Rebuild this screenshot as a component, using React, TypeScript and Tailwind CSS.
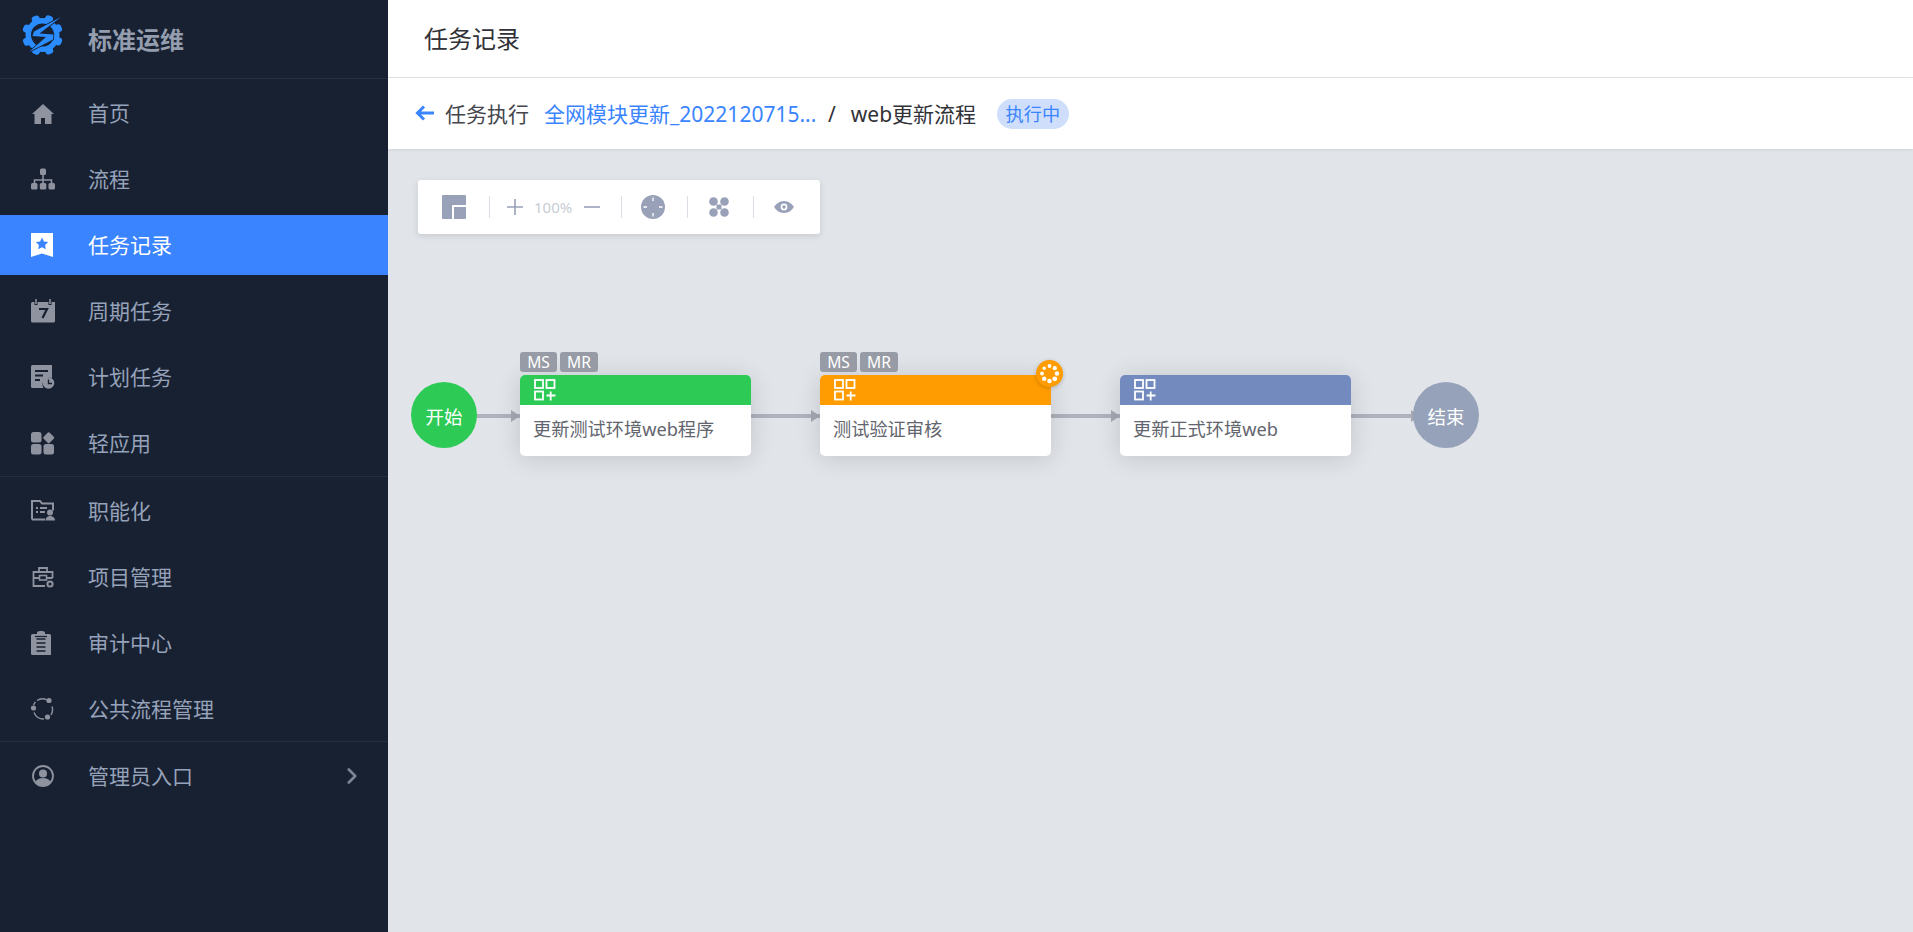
import React from "react";
import { ChevronRight } from "lucide-react";

const G = "#8e939f";

const Ic = ({ children, w = 24, h = 24 }: { children: React.ReactNode; w?: number; h?: number }) => (
  <svg width={w} height={h} viewBox={`0 0 ${w} ${h}`} className="shrink-0">{children}</svg>
);

const Home = () => <Ic><path fill={G} d="M12 3 L23 13 H20.500 V23 H3.500 V13 H1 Z" /><rect x="10" y="17" width="4" height="6" fill="#182132" /></Ic>;
const Net = () => (
  <Ic>
    <rect x="9" y="1.500" width="6" height="6.500" rx="1.500" fill={G} />
    <path d="M12 8v5M3.500 16v-3h17v3M12 13v3" stroke={G} strokeWidth="1.600" fill="none" />
    <rect x="0" y="16" width="6.500" height="6.500" rx="1.500" fill={G} />
    <rect x="8.800" y="16" width="6.500" height="6.500" rx="1.500" fill={G} />
    <rect x="17.500" y="16" width="6.500" height="6.500" rx="1.500" fill={G} />
  </Ic>
);
const Bookmark = () => (
  <Ic>
    <path fill="#fff" d="M0 0H22V24L11 20.500 0 24Z" />
    <path fill="#3a84ff" d="M11 4.500l1.900 3.900 4.300.6-3.100 3 .7 4.300-3.800-2-3.800 2 .7-4.300-3.100-3 4.300-.6Z" />
  </Ic>
);
const Cal = () => (
  <Ic>
    <path fill={G} d="M1.500 3H24v19a1.500 1.500 0 0 1-1.500 1.500H1.500A1.500 1.500 0 0 1 0 22V4.500A1.500 1.500 0 0 1 1.500 3Z" />
    <path stroke="#182132" strokeWidth="3" d="M5 0v6M19 0v6" />
    <path stroke={G} strokeWidth="1.500" d="M5 0v5M19 0v5" />
    <path d="M8 10h8l-4.500 9" stroke="#182132" strokeWidth="2.200" fill="none" />
  </Ic>
);
const Plan = () => (
  <Ic>
    <path fill={G} d="M1.500 0H21V13a7 7 0 0 0-8.500 10H1.500A1.500 1.500 0 0 1 0 21.500V1.500A1.500 1.500 0 0 1 1.500 0Z" />
    <path stroke="#182132" strokeWidth="1.800" d="M4 6h13M4 10.500h8M4 15h5" />
    <circle cx="17.500" cy="18" r="5.800" fill={G} />
    <path d="M17.500 14.500V18.500H21" stroke="#182132" strokeWidth="1.400" fill="none" />
  </Ic>
);
const Apps = () => (
  <Ic>
    <rect x="0" y="1" width="10.500" height="10.500" rx="2.500" fill={G} />
    <rect x="0" y="13" width="10.500" height="10.500" rx="2.500" fill={G} />
    <rect x="12.500" y="13" width="10.500" height="10.500" rx="2.500" fill={G} />
    <rect x="13.400" y="2.400" width="8.600" height="8.600" rx="1.500" fill={G} transform="rotate(45 17.700 6.700)" />
  </Ic>
);
const Folder = () => (
  <Ic>
    <path d="M1 20.500V2h8l2 2.500h11v7M1 20.500h13" stroke={G} strokeWidth="2" fill="none" />
    <path stroke={G} strokeWidth="1.800" d="M5 9h2M9 9h7M5 13h2M9 13h5" />
    <circle cx="19" cy="13.500" r="3" fill={G} />
    <path fill={G} d="M14.500 21.500c0-3 2-4.500 4.500-4.500s5 1.500 5 4.500Z" />
  </Ic>
);
const Case = () => (
  <Ic>
    <path d="M14 21H2.500V7H21.500V13M8 7V3h8v4M2.500 13h6M15.500 13h6" stroke={G} strokeWidth="1.800" fill="none" />
    <rect x="8.500" y="10.500" width="7" height="4.500" stroke={G} strokeWidth="1.600" fill="none" />
    <circle cx="19" cy="19" r="2.600" stroke={G} strokeWidth="2" fill="none" />
  </Ic>
);
const Clip = () => (
  <Ic>
    <path fill={G} d="M1.500 3H6V1.500C6 .5 8 0 10 0s4 .5 4 1.500V3h4.500A1.500 1.500 0 0 1 20 4.500V24H1.500A1.500 1.500 0 0 1 0 22.500V4.500A1.500 1.500 0 0 1 1.500 3Z" />
    <path stroke="#182132" strokeWidth="1.500" d="M5.500 8h9M5.500 12h9M5.500 16h9M5.500 20h9" />
    <path stroke="#182132" strokeWidth="1.200" d="M4 5.500h12" />
  </Ic>
);
const Cycle = () => (
  <Ic>
    <path d="M6 3.500A10 10 0 0 1 16 3M21 9.500A10 10 0 0 1 20 18M13 22A10 10 0 0 1 3 15.500M2.500 8A10 10 0 0 1 4.500 5" stroke={G} strokeWidth="1.400" fill="none" />
    <circle cx="18" cy="3.500" r="2.600" fill={G} />
    <circle cx="2.500" cy="11" r="2.600" fill={G} />
    <circle cx="16.500" cy="20" r="2.600" fill={G} />
  </Ic>
);
const User = () => (
  <Ic>
    <circle cx="12" cy="12" r="10" stroke={G} strokeWidth="1.800" fill="none" />
    <circle cx="12" cy="9.500" r="4" fill={G} />
    <path fill={G} d="M4.500 18c1.500-3 4-4 7.500-4s6 1 7.500 4c-2 2.500-4.500 4-7.500 4s-5.500-1.500-7.500-4Z" />
  </Ic>
);

const TEETH = [0, 45, 90, 135, 180, 225, 270, 315];
const Logo = () => (
  <svg width="44" height="44" viewBox="0 0 44 44" className="shrink-0">
    <circle cx="20.500" cy="21" r="17" fill="#2a8cff" />
    {TEETH.map((a) => (
      <rect key={a} x="16.500" y="0.500" width="8" height="8" rx="3" fill="#2a8cff" transform={`rotate(${a + 22} 20.500 21)`} />
    ))}
    <circle cx="20.500" cy="21" r="11.500" fill="#182132" />
    <path
      d="M39 3 12 17.500 10.500 22 24 23 7 38 31 25.500 31.500 20.500 17.500 19.500Z"
      fill="#2a8cff"
      stroke="#182132"
      strokeWidth="1.600"
      strokeLinejoin="miter"
      paintOrder="stroke"
    />
  </svg>
);

const Item = ({ icon, label, active, tail }: { icon: React.ReactNode; label: string; active?: boolean; tail?: boolean }) => (
  <div className={`mt-[6px] flex h-[60px] items-center gap-[33px] pl-[31px] ${active ? "bg-[#3a84ff] text-white" : "text-[#96a2b9]"}`}>
    {icon}
    <span className="text-[21px] leading-[28px]">{label}</span>
    {tail && <ChevronRight className="ml-auto mr-[23px] text-[#7d8596]" size={26} strokeWidth={2.400} />}
  </div>
);

const NodeIcon = () => (
  <svg width="22" height="22" viewBox="0 0 22 22" className="ml-[14px] mt-[4px]" fill="none" stroke="#fff" strokeWidth="1.800">
    <rect x="1" y="1" width="8" height="8" />
    <rect x="12.500" y="1" width="8" height="8" />
    <rect x="1" y="12.500" width="8" height="8" />
    <path d="M12.500 16.500h9M16.700 12.500v9" />
  </svg>
);

const Tags = () => (
  <div className="absolute left-0 top-[-23px] flex gap-[3px] text-[15.600px] leading-[20px] text-white">
    <span className="flex h-[20px] w-[37px] items-center justify-center rounded-[3px] bg-[#979ba5]">MS</span>
    <span className="flex h-[20px] w-[38px] items-center justify-center rounded-[3px] bg-[#979ba5]">MR</span>
  </div>
);

const Spinner = () => (
  <div className="absolute right-[-12px] top-[-15px] h-[27px] w-[27px] rounded-full bg-[#ff9c01] shadow-[0_1px_4px_rgba(0,0,0,0.2)]">
    <svg width="27" height="27" viewBox="0 0 27 27" fill="#fff">
      <circle cx="13.500" cy="6" r="1.900" />
      <circle cx="18.800" cy="8.200" r="2.100" />
      <circle cx="21" cy="13.500" r="2.200" />
      <circle cx="18.800" cy="18.800" r="2.400" />
      <circle cx="13.500" cy="21" r="2.300" />
      <circle cx="8.200" cy="18.800" r="2.200" />
      <circle cx="6" cy="13.500" r="1.900" />
      <circle cx="8.200" cy="8.200" r="1.700" />
    </svg>
  </div>
);

const Arrow = ({ className }: { className: string }) => (
  <div className={`absolute top-[261px] h-0 w-0 border-y-[6px] border-l-[9px] border-y-transparent border-l-[#a3a8b3] ${className}`} />
);
const Line = ({ className }: { className: string }) => (
  <div className={`absolute top-[265px] h-[4px] bg-[#aeb2bc] ${className}`} />
);

const FlowNode = ({ className, head, label, tags, spin }: { className: string; head: string; label: string; tags?: boolean; spin?: boolean }) => (
  <div className={`absolute top-[226px] h-[81px] w-[231px] rounded-[5px] bg-white shadow-[0_2px_24px_rgba(0,0,0,0.14)] ${className}`}>
    {tags && <Tags />}
    <div className={`h-[30px] overflow-hidden rounded-t-[5px] ${head}`}><NodeIcon /></div>
    <div className="pl-[13px] pt-[11px] text-[18.200px] leading-[26px] text-[#63656e]">{label}</div>
    {spin && <Spinner />}
  </div>
);

const Sep = () => <div className="h-[22px] w-px bg-[#dcdee5]" />;

export default function App() {
  return (
    <div className="flex h-[932px] w-[1913px] overflow-hidden bg-white font-['Noto_Sans','Noto_Sans_CJK_SC',sans-serif]">
      <aside className="flex h-full w-[388px] shrink-0 flex-col bg-[#182132]">
        <div className="flex h-[79px] shrink-0 items-center gap-[22px] border-b border-[#252e3f] pl-[22px] pb-[6px]">
          <Logo />
          <span className="mt-[8px] text-[24px] font-bold leading-[32px] text-[#939dae]">标准运维</span>
        </div>
        <nav className="flex flex-col">
          <div className="flex flex-col border-b border-[#252e3f] pb-[3px] -mt-[2px]">
            <Item icon={<Home />} label="首页" />
            <Item icon={<Net />} label="流程" />
            <Item icon={<Bookmark />} label="任务记录" active />
            <Item icon={<Cal />} label="周期任务" />
            <Item icon={<Plan />} label="计划任务" />
            <Item icon={<Apps />} label="轻应用" />
          </div>
          <div className="flex flex-col border-b border-[#252e3f] pb-[2px] -mt-[2px]">
            <Item icon={<Folder />} label="职能化" />
            <Item icon={<Case />} label="项目管理" />
            <Item icon={<Clip />} label="审计中心" />
            <Item icon={<Cycle />} label="公共流程管理" />
          </div>
          <div className="-mt-[2px]">
            <Item icon={<User />} label="管理员入口" tail />
          </div>
        </nav>
      </aside>
      <main className="flex min-w-0 flex-1 flex-col">
        <header className="flex h-[78px] shrink-0 items-center border-b border-[#e2e4e8] pl-[36px] text-[24px] leading-[32px] text-[#313238]">
          任务记录
        </header>
        <div className="relative z-10 flex h-[71px] shrink-0 items-center bg-white pl-[27px] text-[21px] leading-[28px] text-[#313238] shadow-[0_1px_3px_rgba(0,0,0,0.08)]">
          <svg width="20" height="18" viewBox="0 0 20 18" fill="none" stroke="#3a84ff" strokeWidth="3" className="-mt-[2px]">
            <path d="M19 9H3M9 2.500 2.500 9 9 15.500" />
          </svg>
          <span className="ml-[10px] text-[#45464d]">任务执行</span>
          <span className="ml-[15px] w-[275px] whitespace-nowrap text-[#3a84ff]">全网模块更新_2022120715...</span>
          <span className="ml-[9px]">/</span>
          <span className="ml-[15px] w-[126px] whitespace-nowrap">web更新流程</span>
          <span className="ml-[20px] flex h-[30px] w-[72px] items-center justify-center rounded-full bg-[#cfdffb] text-[18.200px] text-[#3a84ff]">执行中</span>
        </div>
        <section className="relative flex-1 bg-[#e1e4e9]">
          <div className="absolute left-[30px] top-[31px] flex h-[54px] w-[402px] items-center rounded-[3px] bg-white shadow-[0_2px_6px_rgba(0,0,0,0.12)]">
            <svg width="24" height="24" viewBox="0 0 24 24" className="ml-[24px]">
              <path fill="#98a1b8" d="M1 0H23a1 1 0 0 1 1 1V10H11a1 1 0 0 0-1 1V24H1a1 1 0 0 1-1-1V1a1 1 0 0 1 1-1Z" />
              <path fill="#98a1b8" d="M12 12H24V23a1 1 0 0 1-1 1H12Z" />
            </svg>
            <div className="ml-[23px]"><Sep /></div>
            <svg width="16" height="16" viewBox="0 0 16 16" className="ml-[17px]" stroke="#98a1b8" strokeWidth="1.600">
              <path d="M0 8h16M8 0v16" />
            </svg>
            <span className="ml-[11px] w-[39px] whitespace-nowrap text-[15px] leading-[20px] text-[#c8ccd4]">100%</span>
            <svg width="16" height="16" viewBox="0 0 16 16" className="ml-[11px]" stroke="#98a1b8" strokeWidth="1.600">
              <path d="M0 8h16" />
            </svg>
            <div className="ml-[21px]"><Sep /></div>
            <svg width="24" height="24" viewBox="0 0 24 24" className="ml-[19px]">
              <circle cx="12" cy="12" r="12" fill="#98a1b8" />
              <path stroke="#fff" strokeWidth="1.300" d="M12 2.500v3.500M12 18v3.500M2.500 12H6M18 12h3.500" />
            </svg>
            <div className="ml-[22px]"><Sep /></div>
            <svg width="20" height="20" viewBox="0 0 20 20" className="ml-[21px]" fill="#98a1b8">
              <circle cx="4.500" cy="4.500" r="4.300" />
              <circle cx="15.500" cy="4.500" r="4.300" />
              <circle cx="4.500" cy="15.500" r="4.300" />
              <circle cx="15.500" cy="15.500" r="4.300" />
              <rect x="7.500" y="7.500" width="5" height="5" />
            </svg>
            <div className="ml-[24px]"><Sep /></div>
            <svg width="20" height="14" viewBox="0 0 20 14" className="ml-[20px]">
              <path fill="#98a1b8" d="M10 1c4.500 0 8 3 10 6-2 3-5.500 6-10 6S2 10 0 7c2-3 5.500-6 10-6Z" />
              <circle cx="10" cy="7" r="3.400" fill="#fff" />
              <circle cx="10" cy="7" r="1.700" fill="#98a1b8" />
            </svg>
          </div>

          <Line className="left-[88px] w-[44px]" />
          <Arrow className="left-[123px]" />
          <Line className="left-[363px] w-[69px]" />
          <Arrow className="left-[423px]" />
          <Line className="left-[663px] w-[69px]" />
          <Arrow className="left-[723px]" />
          <Line className="left-[963px] w-[64px]" />
          <Arrow className="left-[1023px]" />

          <div className="absolute left-[23px] top-[233px] flex h-[66px] w-[66px] items-center justify-center rounded-full bg-[#2dcb56] pt-[3px] text-[18.500px] text-white">开始</div>
          <FlowNode className="left-[132px]" head="bg-[#2dcb56]" label="更新测试环境web程序" tags />
          <FlowNode className="left-[432px]" head="bg-[#ff9c01]" label="测试验证审核" tags spin />
          <FlowNode className="left-[732px]" head="bg-[#738abe]" label="更新正式环境web" />
          <div className="absolute left-[1025px] top-[233px] flex h-[66px] w-[66px] items-center justify-center rounded-full bg-[#96a2b9] pt-[3px] text-[18.500px] text-white">结束</div>
        </section>
      </main>
    </div>
  );
}
